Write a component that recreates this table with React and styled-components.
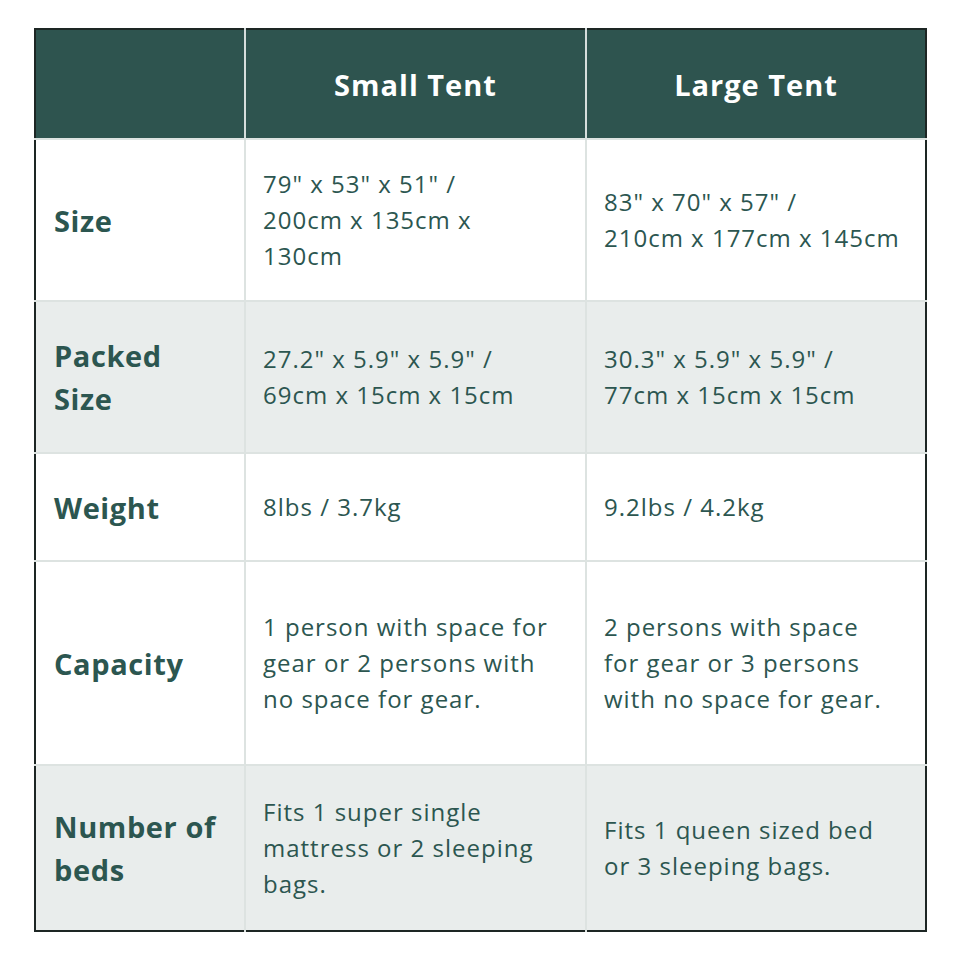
import React from "react";
import styled, { createGlobalStyle } from "styled-components";

const GlobalStyle = createGlobalStyle`
  html, body {
    margin: 0;
    padding: 0;
    background: #ffffff;
  }
  body {
    font-family: "Open Sans", "Noto Sans", sans-serif;
  }
`;

const rows = [
  {
    label: ["Size"],
    small: ['79" x 53" x 51" /', "200cm x 135cm x", "130cm"],
    large: ['83" x 70" x 57" /', "210cm x 177cm x 145cm"],
    height: 162,
  },
  {
    label: ["Packed", "Size"],
    small: ['27.2" x 5.9" x 5.9" /', "69cm x 15cm x 15cm"],
    large: ['30.3" x 5.9" x 5.9" /', "77cm x 15cm x 15cm"],
    height: 152,
    shaded: true,
  },
  {
    label: ["Weight"],
    small: ["8lbs / 3.7kg"],
    large: ["9.2lbs / 4.2kg"],
    height: 108,
  },
  {
    label: ["Capacity"],
    small: ["1 person with space for", "gear or 2 persons with", "no space for gear."],
    large: ["2 persons with space", "for gear or 3 persons", "with no space for gear."],
    height: 204,
  },
  {
    label: ["Number of", "beds"],
    small: ["Fits 1 super single", "mattress or 2 sleeping", "bags."],
    large: ["Fits 1 queen sized bed", "or 3 sleeping bags."],
    height: 166,
    shaded: true,
  },
];

const Page = styled.div`
  padding: 28px 0 0 34px;
`;

const Table = styled.table`
  width: 891px;
  border-collapse: collapse;
  border: 2px solid #1d2624;
  table-layout: fixed;
  color: #2c5650;
`;

const HeadRow = styled.tr`
  height: 110px;
  background: #2e544f;
`;

const HeadCell = styled.th`
  border-left: 2px solid #d5dedc;
  color: #ffffff;
  font-size: 29px;
  font-weight: 700;
  letter-spacing: 1px;
  text-align: center;
  padding: 0;
  &:first-child {
    border-left: none;
  }
`;

const Row = styled.tr`
  height: ${(p) => p.$h}px;
  background: ${(p) => (p.$shaded ? "#e9edec" : "#ffffff")};
`;

const LabelCell = styled.td`
  border-top: 2px solid #dde3e1;
  padding: 0 0 0 18px;
  font-size: 29px;
  font-weight: 700;
  letter-spacing: 0.6px;
  line-height: 43px;
  vertical-align: middle;
`;

const ValueCell = styled.td`
  border-top: 2px solid #dde3e1;
  border-left: 2px solid #dde3e1;
  padding: 0 0 0 17px;
  font-size: 24px;
  font-weight: 400;
  letter-spacing: 1px;
  line-height: 36px;
  vertical-align: middle;
`;

const Line = styled.div`
  white-space: nowrap;
`;

const Lines = ({ items }) => items.map((t, i) => <Line key={i}>{t}</Line>);

export default function App() {
  return (
    <Page>
      <GlobalStyle />
      <Table>
        <colgroup>
          <col style={{ width: 210 }} />
          <col style={{ width: 341 }} />
          <col style={{ width: 340 }} />
        </colgroup>
        <thead>
          <HeadRow>
            <HeadCell />
            <HeadCell>Small Tent</HeadCell>
            <HeadCell>Large Tent</HeadCell>
          </HeadRow>
        </thead>
        <tbody>
          {rows.map((r, i) => (
            <Row key={i} $h={r.height} $shaded={r.shaded}>
              <LabelCell>
                <Lines items={r.label} />
              </LabelCell>
              <ValueCell>
                <Lines items={r.small} />
              </ValueCell>
              <ValueCell>
                <Lines items={r.large} />
              </ValueCell>
            </Row>
          ))}
        </tbody>
      </Table>
    </Page>
  );
}
